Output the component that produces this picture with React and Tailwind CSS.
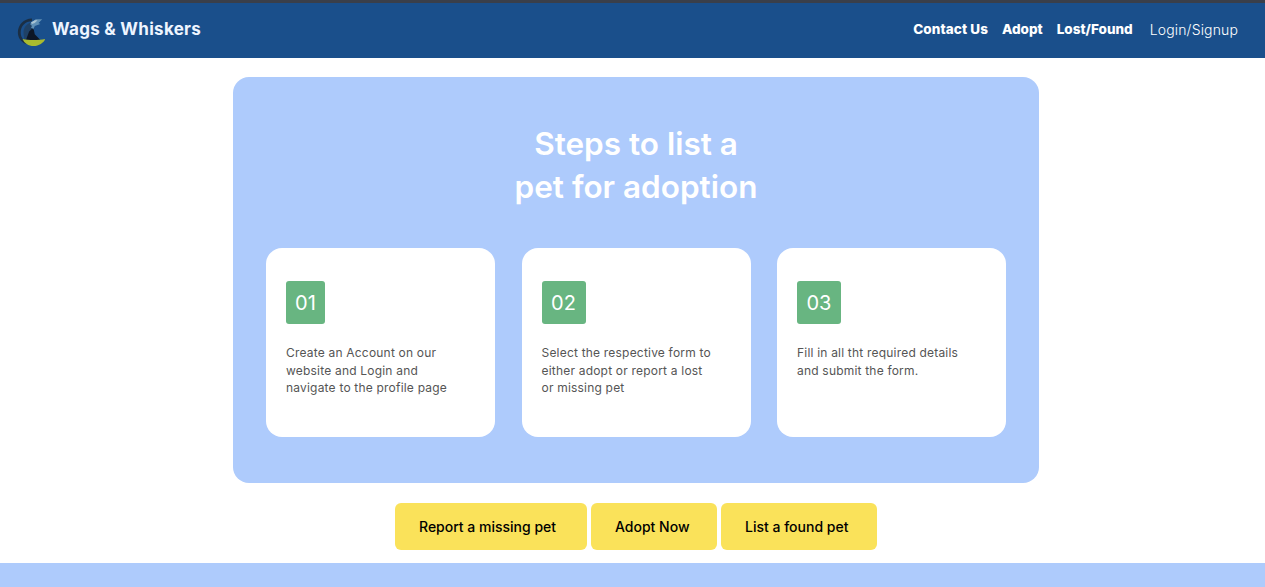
const font = { fontFamily: 'Inter, "Liberation Sans", sans-serif' };

function Logo() {
  return (
    <svg width="30" height="31" viewBox="0 0 32 32" className="shrink-0 mt-[1px]">
      <path d="M17 2C8 2 2 9 2 17c0 5 3 10 8 12l2-1C7 25 5 21 5 17 5 10 10 5 17 5Z" fill="#1b2f45" />
      <path d="M8 17C8 11 12 7 17 6l3 6-3 5 6 7-14 2C9 23 8 20 8 17Z" fill="#1f4166" />
      <path d="M15 8l6-5 7 0-4 4 2 1-6 2-1 3-3-1 1-2Z" fill="#5f8fb5" />
      <path d="M16 6l4-2 3 0-3 3-3 1Z" fill="#a9c4d4" />
      <path d="M11 24l3-8 3-3 2 1 1 5 6 6-15 1Z" fill="#0d1626" />
      <path d="M7 24c6 1.5 17 1.5 24 0-1 4-7 7.500-12 7.500-6 0-10-3-12-7.500Z" fill="#a9bb2e" />
    </svg>
  );
}

const steps = [
  ['01', ['Create an Account on our', 'website and Login and', 'navigate to the profile page'], 'w-[39px]'],
  ['02', ['Select the respective form to', 'either adopt or report a lost', 'or missing pet'], 'w-[44px]'],
  ['03', ['Fill in all tht required details', 'and submit the form.'], 'w-[44px]'],
];

function Card({ num, lines, w }) {
  return (
    <div className="w-[229px] h-[189px] bg-white rounded-[16px] pt-[33px] px-[20px]">
      <div className={`${w} h-[43px] bg-[#68b581] rounded-[3px] flex items-center justify-center text-white text-[20px]`}>{num}</div>
      <p className="mt-[20px] text-[12px] leading-[17.5px] text-[#555] tracking-[0.2px]">
        {lines.map((l) => <span key={l} className="block whitespace-nowrap">{l}</span>)}
      </p>
    </div>
  );
}

function Btn({ w, children }) {
  return (
    <button className={`${w} h-[47px] bg-[#fae25a] rounded-[6px] pl-[24px] text-left text-[14px] font-medium text-black`}>{children}</button>
  );
}

export default function App() {
  return (
    <div style={font} className="h-[587px] overflow-hidden bg-white flex flex-col">
      <div className="h-[3px] bg-[#3a3f4a]" />
      <header className="h-[55px] bg-[#1a4f8b] flex items-center justify-between pl-[16px] pr-[27px] text-white">
        <div className="flex items-center gap-[6px]">
          <Logo />
          <span className="text-[17px] font-bold tracking-[0.3px] text-[#eef5ff] mb-[2px]">Wags &amp; Whiskers</span>
        </div>
        <nav className="flex items-center text-[13.5px] mb-[2px]">
          <a className="font-extrabold mr-[14px] tracking-[0.1px]">Contact Us</a>
          <a className="font-extrabold mr-[14px]">Adopt</a>
          <a className="font-extrabold mr-[17px]">Lost/Found</a>
          <a className="font-light text-[14px] tracking-[0.15px]">Login/Signup</a>
        </nav>
      </header>
      <main className="flex-1 flex flex-col items-center pt-[19px] pl-[7px]">
        <section className="w-[806px] h-[406px] bg-[#aecbfc] rounded-[16px] px-[33px] pt-[46px]">
          <h1 className="text-center text-white font-semibold text-[31.5px] leading-[42.5px]">
            Steps to list a<br />pet for adoption
          </h1>
          <div className="mt-[40px] flex justify-between">
            {steps.map(([n, l, w]) => <Card key={n} num={n} lines={l} w={w} />)}
          </div>
        </section>
        <div className="mt-[20px] flex gap-[4px]">
          <Btn w="w-[192px]">Report a missing pet</Btn>
          <Btn w="w-[126px]">Adopt Now</Btn>
          <Btn w="w-[156px]">List a found pet</Btn>
        </div>
      </main>
      <footer className="h-[24px] bg-[#aecbfc]" />
    </div>
  );
}
